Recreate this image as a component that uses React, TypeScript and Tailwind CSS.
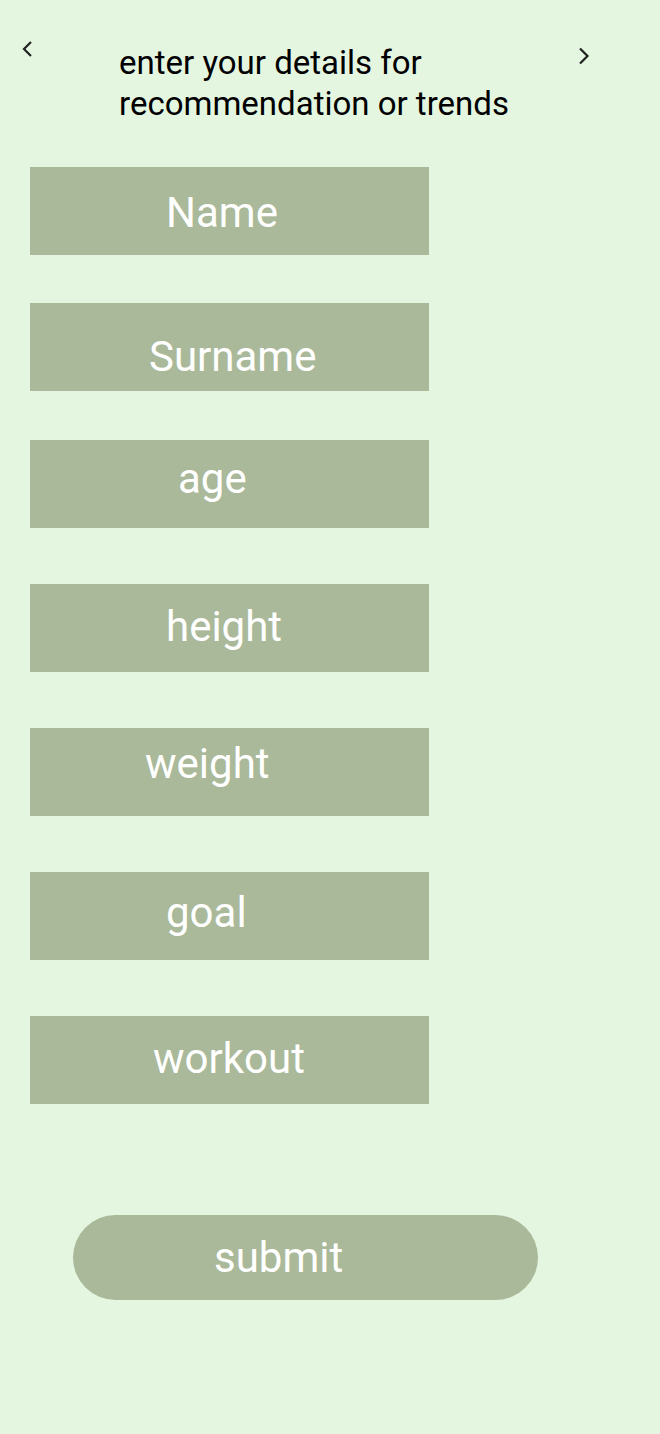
import React from "react"

const fields = [
  { label: "Name", className: "mt-0 pl-[136px] pt-[25px]" },
  { label: "Surname", className: "mt-[48px] pl-[119px] pt-[33px]" },
  { label: "age", className: "mt-[49px] pl-[148px] pt-[18px]" },
  { label: "height", className: "mt-[56px] pl-[136px] pt-[22px]" },
  { label: "weight", className: "mt-[56px] pl-[115px] pt-[15px]" },
  { label: "goal", className: "mt-[56px] pl-[136px] pt-[20px]" },
  { label: "workout", className: "mt-[56px] pl-[123px] pt-[22px]" },
]

const App: React.FC = () => {
  return (
    <div className="w-[660px] min-h-[1434px] bg-[#e4f6e0] font-['Roboto',sans-serif]">
      <div className="flex items-start">
        <svg
          className="ml-[21px] mt-[40px] shrink-0"
          width="12"
          height="18"
          viewBox="0 0 12 18"
          fill="none"
          stroke="#222"
          strokeWidth="2.2"
        >
          <path d="M10 2 L3 9 L10 16" />
        </svg>
        <h1 className="ml-[86px] mt-[42px] w-[420px] text-[33px] leading-[41px] text-black">
          enter your details for
          <br />
          recommendation or trends
        </h1>
        <svg
          className="ml-[39px] mt-[46px] shrink-0"
          width="12"
          height="20"
          viewBox="0 0 12 20"
          fill="none"
          stroke="#222"
          strokeWidth="2.2"
        >
          <path d="M2 2.5 L9.5 10 L2 17.5" />
        </svg>
      </div>

      <div className="mt-[43px] flex flex-col pl-[30px]">
        {fields.map((field) => (
          <div
            key={field.label}
            className={`h-[88px] w-[399px] bg-[#aab99a] text-[42px] leading-none text-white ${field.className}`}
          >
            {field.label}
          </div>
        ))}
      </div>

      <div className="mt-[111px] pl-[73px]">
        <div
          role="button"
          className="h-[85px] w-[465px] rounded-full bg-[#aab99a] pl-[141px] pt-[22px] text-[42px] leading-none text-white"
        >
          submit
        </div>
      </div>
    </div>
  )
}

export default App
